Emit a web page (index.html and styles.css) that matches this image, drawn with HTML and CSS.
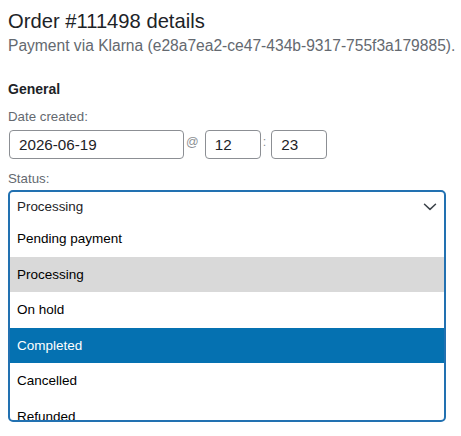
FILE: index.html
```html
<!DOCTYPE html>
<html lang="en">
<head>
<meta charset="utf-8">
<title>Order #111498 details</title>
<link rel="stylesheet" href="styles.css">
</head>
<body>
<div class="page">
  <h1 class="title">Order #111498 details</h1>
  <p class="subtitle">Payment via Klarna (e28a7ea2-ce47-434b-9317-755f3a179885).</p>
  <h3 class="section">General</h3>
  <div class="label">Date created:</div>
  <div class="date-row">
    <input class="field date" type="text" value="2026-06-19">
    <span class="sep at">@</span>
    <input class="field time" type="text" value="12">
    <span class="sep colon">:</span>
    <input class="field time" type="text" value="23">
  </div>
  <div class="label status-label">Status:</div>
  <div class="select">
    <div class="select-head">
      <span>Processing</span>
      <svg class="chevron" width="14" height="8" viewBox="0 0 14 8"><path d="M1.5 1.2 L7 6.4 L12.5 1.2" fill="none" stroke="#3c434a" stroke-width="1.5" stroke-linecap="round" stroke-linejoin="round"/></svg>
    </div>
    <ul class="options">
      <li class="option">Pending payment</li>
      <li class="option current">Processing</li>
      <li class="option">On hold</li>
      <li class="option highlighted">Completed</li>
      <li class="option">Cancelled</li>
      <li class="option">Refunded</li>
    </ul>
  </div>
</div>
</body>
</html>
```

FILE: styles.css
```css
html, body {
  margin: 0;
  padding: 0;
  background: #ffffff;
}

body {
  font-family: "Liberation Sans", Arial, sans-serif;
  color: #1d2327;
}

.page {
  padding: 10px 8px 0 8px;
}

.title {
  margin: 0;
  font-size: 20.2px;
  font-weight: 400;
  line-height: 23px;
  color: #1d2327;
}

.subtitle {
  margin: 4px 0 0 0;
  font-size: 15.6px;
  line-height: 18px;
  color: #646970;
  white-space: nowrap;
}

.section {
  margin: 26px 0 0 0;
  font-size: 14px;
  font-weight: 700;
  line-height: 16px;
  color: #1d2327;
}

.label {
  margin-top: 12px;
  font-size: 13.3px;
  line-height: 15px;
  color: #646970;
}

.date-row {
  margin-top: 6px;
  display: flex;
  align-items: center;
}

.field {
  box-sizing: border-box;
  height: 29px;
  margin: 0;
  padding: 0 0 0 9px;
  border: 1px solid #8c8f94;
  border-radius: 4px;
  background: #ffffff;
  font-family: "Liberation Sans", Arial, sans-serif;
  font-size: 15.2px;
  color: #1d2327;
  outline: none;
}

.date {
  width: 175px;
  margin-left: 1px;
}

.time {
  width: 56px;
}

.sep {
  font-size: 12.5px;
  color: #8c8f94;
  line-height: 15px;
  position: relative;
  top: -2px;
}

.at {
  margin: 0 6px 0 2px;
}

.colon {
  margin: 0 5px 0 2px;
}

.status-label {
  margin-top: 12px;
}

.select {
  box-sizing: border-box;
  margin-top: 4px;
  width: 438px;
  height: 232px;
  border: 2px solid #2271b1;
  border-radius: 5px;
  overflow: hidden;
  background: #ffffff;
}

.select-head {
  height: 29px;
  display: flex;
  align-items: center;
  justify-content: space-between;
  padding: 0 7px 0 7px;
  font-size: 13.4px;
  color: #1d2327;
}

.chevron {
  display: block;
  margin-top: 1px;
}

.options {
  list-style: none;
  margin: 0;
  padding: 0;
}

.option {
  height: 35.5px;
  line-height: 35.5px;
  padding-left: 7px;
  font-size: 13.5px;
  color: #000000;
}

.option.current {
  background: #d9d9d9;
}

.option.highlighted {
  background: #0571b1;
  color: #ffffff;
}
```
